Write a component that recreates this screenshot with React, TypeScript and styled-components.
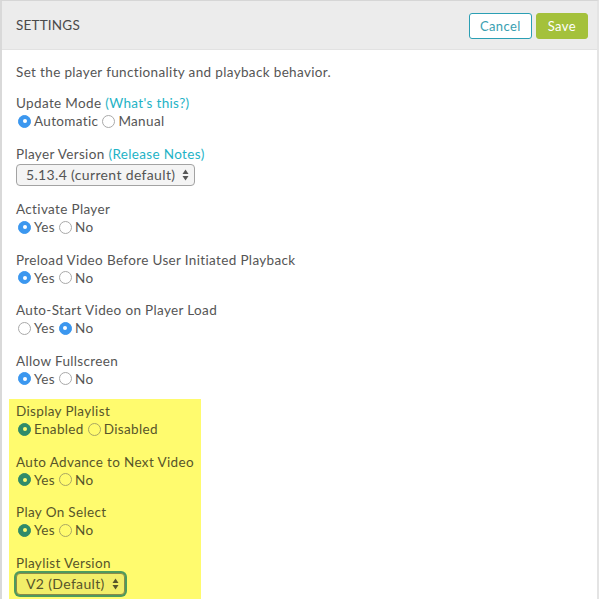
import React from 'react';
import styled, { createGlobalStyle } from 'styled-components';

const GlobalStyle = createGlobalStyle`
  html, body {
    margin: 0;
    padding: 0;
    background: #ffffff;
  }
  body {
    font-family: Lato, "Open Sans", "Liberation Sans", sans-serif;
    color: #555555;
  }
`;

const Panel = styled.div`
  width: 599px;
  height: 599px;
  overflow: hidden;
  border-top: 1px solid #d6d6d6;
  border-left: 2px solid #d9d9d9;
  border-right: 2px solid #e4e4e4;
  box-sizing: border-box;
  background: #fff;
`;

const Header = styled.div`
  height: 48px;
  background: #ececec;
  border-bottom: 1px solid #e2e2e2;
  display: flex;
  align-items: center;
  justify-content: space-between;
  padding: 0 9px 0 14px;
`;

const Title = styled.h1`
  margin: 0;
  font-size: 13.5px;
  font-weight: 400;
  letter-spacing: 0.2px;
  color: #4a4a4a;
`;

const Actions = styled.div`
  display: flex;
  gap: 4px;
  margin-top: 2px;
`;

const Button = styled.button<{ primary?: boolean }>`
  font-family: inherit;
  font-size: 13px;
  letter-spacing: 0.4px;
  height: 26px;
  padding: 0 ${({ primary }) => (primary ? '11px' : '10px')};
  border-radius: 3px;
  cursor: pointer;
  border: 1px solid ${({ primary }) => (primary ? '#a4c13b' : '#2b9fb4')};
  background: ${({ primary }) => (primary ? '#a4c13b' : '#ffffff')};
  color: ${({ primary }) => (primary ? '#ffffff' : '#3a9fb1')};
`;

const Body = styled.div`
  padding: 13px 14px 0 14px;
  font-size: 13.5px;
  line-height: 18px;
  letter-spacing: 0.35px;
  color: var(--text, #555555);
`;

const Intro = styled.p`
  margin: 0 0 13px;
`;

const Field = styled.div`
  margin-bottom: 14.5px;
`;

const Label = styled.div`
  line-height: 18px;
`;

const Link = styled.a`
  color: #1eb3c6;
  text-decoration: none;
`;

const Options = styled.div`
  display: flex;
  align-items: center;
  height: 18px;
`;

const Option = styled.label`
  display: inline-flex;
  align-items: center;
  gap: 3px;
  margin-right: 2px;
`;

const Radio = styled.span<{ checked?: boolean }>`
  width: 13px;
  height: 13px;
  margin-left: 2px;
  border-radius: 50%;
  box-sizing: border-box;
  display: inline-flex;
  align-items: center;
  justify-content: center;
  border: 1px solid ${({ checked }) => (checked ? 'var(--accent, #3b97ef)' : 'var(--ring, #a9a9a9)')};
  background: ${({ checked }) => (checked ? 'var(--accent, #3b97ef)' : 'transparent')};
  &::after {
    content: '';
    width: 4px;
    height: 4px;
    border-radius: 50%;
    background: ${({ checked }) => (checked ? 'var(--dot, #ffffff)' : 'transparent')};
  }
`;

const Select = styled.div<{ focused?: boolean }>`
  display: inline-flex;
  align-items: center;
  justify-content: space-between;
  gap: 7px;
  height: 22px;
  box-sizing: border-box;
  margin-top: 1px;
  padding: 0 5px 0 9px;
  border: 1px solid var(--selborder, #a3a3a3);
  border-radius: 4px;
  background: var(--selbg, #f4f4f4);
  font-size: 14px;
  box-shadow: ${({ focused }) => (focused ? '0 0 0 2px #4e9a5e' : 'none')};
`;

const Highlight = styled.div`
  --accent: #2f8b6a;
  --dot: #fffb6e;
  --ring: #a9a663;
  --text: #57552a;
  --selborder: #8d8a46;
  --selbg: #f2ee69;
  color: var(--text);
  background: #fffb6e;
  width: 192px;
  box-sizing: border-box;
  margin: -3.5px 0 0 -7px;
  padding: 3.5px 7px 6px;
`;

const Arrows = () => (
  <svg width="7" height="12" viewBox="0 0 7 12" aria-hidden="true">
    <path d="M3.5 0.5 L6.5 5 H0.5 Z" fill="currentColor" />
    <path d="M3.5 11.5 L6.5 7 H0.5 Z" fill="currentColor" />
  </svg>
);

type Choice = { label: string; checked?: boolean };

const RadioField = ({ label, choices }: { label: React.ReactNode; choices: Choice[] }) => (
  <Field>
    <Label>{label}</Label>
    <Options>
      {choices.map((c) => (
        <Option key={c.label}>
          <Radio checked={c.checked} />
          {c.label}
        </Option>
      ))}
    </Options>
  </Field>
);

const yesNo = (yes: boolean): Choice[] => [
  { label: 'Yes', checked: yes },
  { label: 'No', checked: !yes },
];

const App = () => (
  <>
    <GlobalStyle />
    <Panel>
      <Header>
        <Title>SETTINGS</Title>
        <Actions>
          <Button>Cancel</Button>
          <Button primary>Save</Button>
        </Actions>
      </Header>
      <Body>
        <Intro>Set the player functionality and playback behavior.</Intro>
        <RadioField
          label={
            <>
              Update Mode <Link>(What's this?)</Link>
            </>
          }
          choices={[
            { label: 'Automatic', checked: true },
            { label: 'Manual' },
          ]}
        />
        <Field>
          <Label>
            Player Version <Link>(Release Notes)</Link>
          </Label>
          <Select>
            5.13.4 (current default)
            <Arrows />
          </Select>
        </Field>
        <RadioField label="Activate Player" choices={yesNo(true)} />
        <RadioField label="Preload Video Before User Initiated Playback" choices={yesNo(true)} />
        <RadioField label="Auto-Start Video on Player Load" choices={yesNo(false)} />
        <RadioField label="Allow Fullscreen" choices={yesNo(true)} />
        <Highlight>
          <RadioField
            label="Display Playlist"
            choices={[
              { label: 'Enabled', checked: true },
              { label: 'Disabled' },
            ]}
          />
          <RadioField label="Auto Advance to Next Video" choices={yesNo(true)} />
          <RadioField label="Play On Select" choices={yesNo(true)} />
          <Field>
            <Label>Playlist Version</Label>
            <Select focused>
              V2 (Default)
              <Arrows />
            </Select>
          </Field>
        </Highlight>
      </Body>
    </Panel>
  </>
);

export default App;
